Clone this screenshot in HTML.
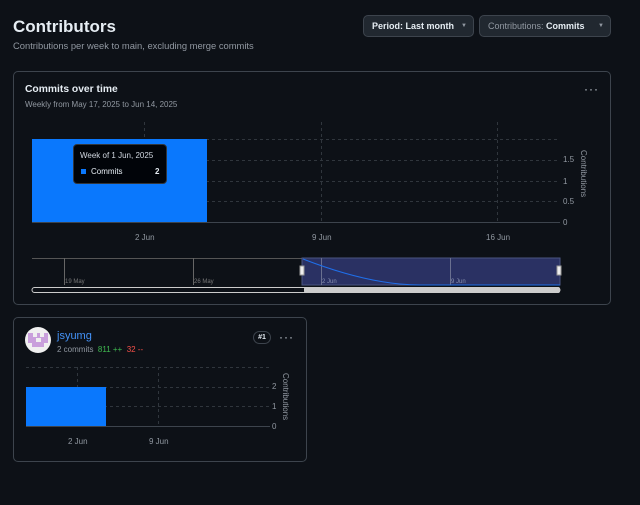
<!DOCTYPE html>
<html><head><style>
*{margin:0;padding:0;box-sizing:border-box}
body{width:640px;height:505px;background:#0d1117;font-family:"Liberation Sans",sans-serif;color:#e6edf3;position:relative;overflow:hidden}
.a{position:absolute;white-space:nowrap}
.btn{position:absolute;top:15px;height:22px;border:1px solid #3d444d;border-radius:5px;background:#212830;font-size:9px;line-height:20px;padding-left:8px}
.card{position:absolute;border:1px solid #3d444d;border-radius:5px}
.muted{color:#9198a1}
</style></head><body>
<div class="a" style="left:13px;top:17px;font-size:17px;font-weight:bold">Contributors</div>
<div class="a muted" style="left:13px;top:40px;font-size:9.4px">Contributions per week to main, excluding merge commits</div>
<div class="btn" style="left:363px;width:111px;font-weight:bold">Period: Last month <span style="position:absolute;left:97px;font-size:6px;color:#9198a1">▼</span></div>
<div class="btn" style="left:479px;width:132px"><span class="muted">Contributions:</span> <b>Commits</b> <span style="position:absolute;left:118px;font-size:6px;color:#9198a1">▼</span></div>

<div class="card" style="left:13px;top:71px;width:598px;height:234px"></div>
<div class="a" style="left:25px;top:84px;font-size:10.3px;font-weight:bold">Commits over time</div>
<div class="a muted" style="left:25px;top:100px;font-size:8px">Weekly from May 17, 2025 to Jun 14, 2025</div>
<div class="a" style="left:584px;top:82px;font-size:12px;letter-spacing:1px;color:#c9d1d9">···</div>

<svg class="a" style="left:0;top:0" width="640" height="505">
<g stroke="#30363d" stroke-dasharray="3,3" stroke-width="1">
<line x1="32" y1="139.5" x2="560" y2="139.5"/><line x1="32" y1="160.5" x2="560" y2="160.5"/><line x1="32" y1="181.5" x2="560" y2="181.5"/><line x1="32" y1="201.5" x2="560" y2="201.5"/>
<line x1="144.5" y1="122" x2="144.5" y2="222"/><line x1="321.5" y1="122" x2="321.5" y2="222"/><line x1="497.5" y1="122" x2="497.5" y2="222"/>
<line x1="26" y1="367.5" x2="270" y2="367.5"/><line x1="26" y1="387.5" x2="270" y2="387.5"/><line x1="26" y1="406.5" x2="270" y2="406.5"/>
<line x1="77.5" y1="367" x2="77.5" y2="426"/><line x1="158.5" y1="367" x2="158.5" y2="426"/>
</g>
<line x1="32" y1="222.5" x2="560" y2="222.5" stroke="#3d444d"/>
<line x1="26" y1="426.5" x2="270" y2="426.5" stroke="#3d444d"/>
<rect x="32" y="139" width="175" height="83" fill="#0a78fd"/>
<rect x="26" y="387" width="80" height="39" fill="#0a78fd"/>
<g fill="#9198a1" font-size="8" font-family="Liberation Sans">
<text x="563" y="162">1.5</text><text x="563" y="184">1</text><text x="563" y="204">0.5</text><text x="563" y="225">0</text>
<text x="135" y="240">2 Jun</text><text x="312" y="240">9 Jun</text><text x="486" y="240">16 Jun</text>
<text x="272" y="389">2</text><text x="272" y="409">1</text><text x="272" y="429">0</text>
<text x="68" y="444">2 Jun</text><text x="149" y="444">9 Jun</text>
<text transform="translate(581,150) rotate(90)">Contributions</text>
<text transform="translate(283,373) rotate(90)">Contributions</text>
</g>
<line x1="32" y1="258.5" x2="560" y2="258.5" stroke="#555"/>
<rect x="302" y="258" width="258" height="27" fill="#2a3163" stroke="#4a5580"/>
<line x1="64.5" y1="258" x2="64.5" y2="285" stroke="#666"/><line x1="193.5" y1="258" x2="193.5" y2="285" stroke="#666"/>
<line x1="321.5" y1="258" x2="321.5" y2="285" stroke="#6a7090"/><line x1="450.5" y1="258" x2="450.5" y2="285" stroke="#6a7090"/>
<path d="M303 259 Q370 285 420 285 L560 285" stroke="#1f6feb" fill="none"/>
<g font-size="6" fill="#777"><text x="65" y="283">19 May</text><text x="194" y="283">26 May</text><text x="322" y="283" fill="#8890b0">2 Jun</text><text x="451" y="283" fill="#8890b0">9 Jun</text></g>
<rect x="300" y="266" width="4" height="9" fill="#eee" stroke="#999"/><rect x="557" y="266" width="4" height="9" fill="#eee" stroke="#999"/>
<rect x="32" y="287.5" width="528" height="5" rx="2.5" fill="none" stroke="#ccc"/>
<rect x="304" y="287" width="256" height="6" rx="2" fill="#ccc"/>
<circle cx="38" cy="340" r="13" fill="#f0f0f0"/>
<g fill="#c9a0dc"><rect x="28" y="333" width="20" height="14"/></g>
<g fill="#f0f0f0"><rect x="33" y="333" width="4" height="4"/><rect x="40" y="333" width="4" height="4"/><rect x="36" y="338" width="5" height="4"/><rect x="28" y="343" width="4" height="4"/><rect x="44" y="343" width="4" height="4"/></g>
</svg>

<div class="a" style="left:73px;top:144px;width:94px;height:40px;background:#010409;border:1px solid #30363d;border-radius:4px"></div>
<div class="a" style="left:80px;top:151px;font-size:8px;color:#d1d7e0">Week of 1 Jun, 2025</div>
<div class="a" style="left:81px;top:169px;width:5px;height:5px;background:#0a78fd"></div>
<div class="a" style="left:91px;top:167px;font-size:8px">Commits</div>
<div class="a" style="left:155px;top:167px;font-size:8px;font-weight:bold">2</div>

<div class="card" style="left:13px;top:317px;width:294px;height:145px"></div>
<div class="a" style="left:57px;top:330px;font-size:11px;color:#4493f8">jsyumg</div>
<div class="a" style="left:57px;top:345px;font-size:8px"><span class="muted">2 commits</span>&nbsp; <span style="color:#3fb950">811 ++</span>&nbsp; <span style="color:#f85149">32 --</span></div>
<div class="a" style="left:253px;top:331px;width:18px;height:13px;border:1px solid #3d444d;border-radius:7px;font-size:7px;font-weight:bold;text-align:center;line-height:11px">#1</div>
<div class="a" style="left:279px;top:330px;font-size:12px;letter-spacing:1px;color:#c9d1d9">···</div>
</body></html>
